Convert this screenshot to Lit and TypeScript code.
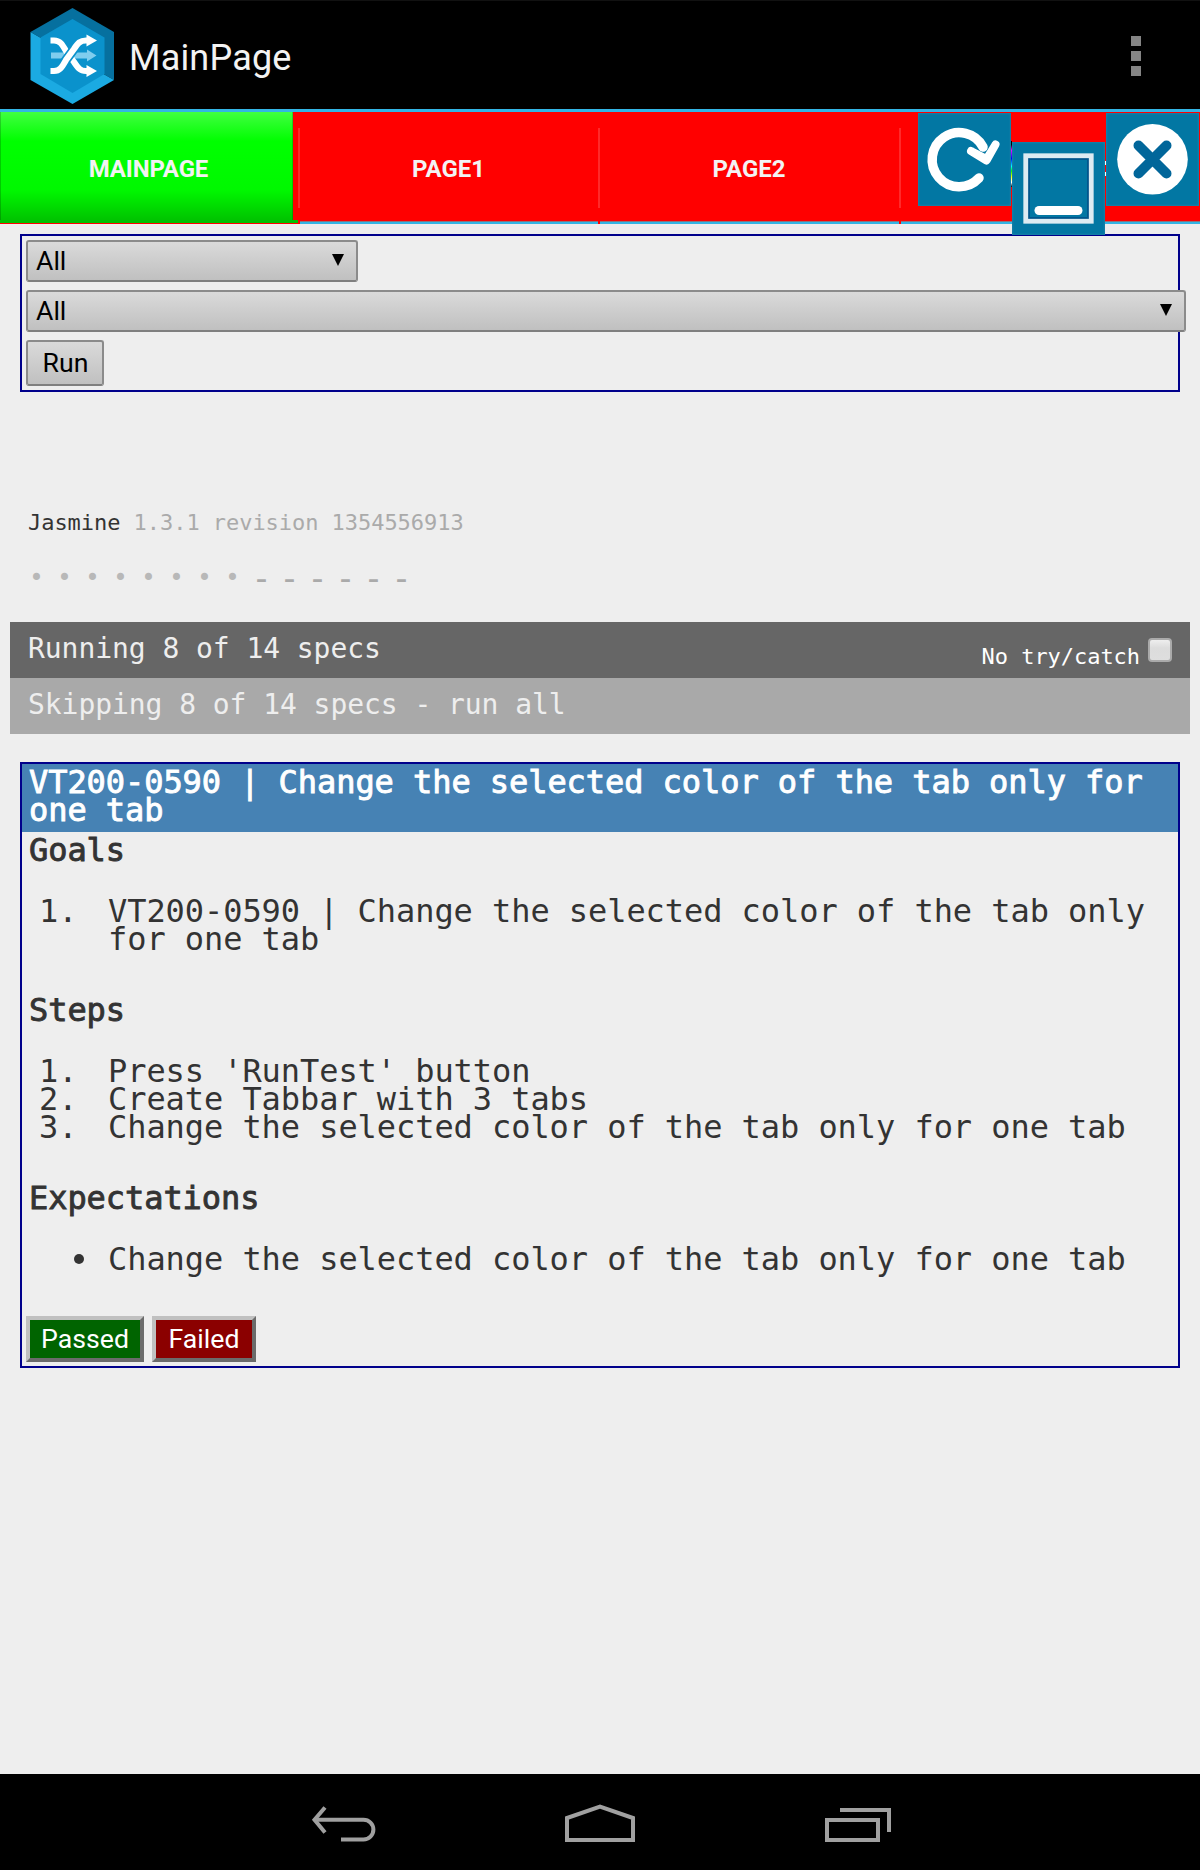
import { LitElement, html, css, svg } from "lit";
import { customElement, property } from "lit/decorators.js";

@customElement("picker-box")
class PickerBox extends LitElement {
  @property() label = "";
  static styles = css`
    :host { display: block; height: 42px; }
    .box {
      box-sizing: border-box; height: 42px; display: flex; align-items: center; justify-content: space-between;
      padding: 0 12px 0 8px; border: 2px solid #8b8b8b; border-bottom-color: #7f7f7f; border-radius: 3px;
      background: linear-gradient(#dadada, #c0c0c0);
      font: 26.67px/31px Roboto, sans-serif; color: #000;
    }
    .arrow { width: 12px; height: 12px; margin-bottom: 3px; }
  `;
  render() {
    return html`<div class="box"><span>${this.label}</span>
      <svg class="arrow" viewBox="0 0 12 12"><path d="M0 0H12L6 12Z" /></svg></div>`;
  }
}

@customElement("spec-card")
class SpecCard extends LitElement {
  static styles = css`
    :host {
      display: block; box-sizing: border-box; height: 606px; border: 2px solid #00008b;
      font: 32px/28px "DejaVu Sans Mono", monospace; letter-spacing: -0.065px; color: #333;
    }
    .title, .head { margin: 0; font: inherit; -webkit-text-stroke: 0.9px currentColor; }
    .title { padding: 4px 7px 0; background: #4682b4; color: #fff; height: 68px; box-sizing: border-box; }
    .head { padding-left: 7px; }
    .head.first { margin-top: 4px; }
    .list { margin: 33px 0 43px; padding: 0; list-style: none; }
    .row { display: grid; grid-template-columns: 86px 1fr; }
    .mark { padding-left: 17px; }
    .dot { display: block; width: 10px; height: 10px; margin: 9px 0 0 52px; border-radius: 50%; background: #333; }
    .actions { display: flex; gap: 8px; padding-left: 4px; }
    .btn {
      box-sizing: border-box; height: 46px; margin: 0; padding: 0; border: 4px solid;
      border-color: #c0c0c0 #6b6b6b #6b6b6b #c0c0c0;
      font: 26.67px/36px Roboto, sans-serif; color: #fff;
    }
    .pass { width: 118px; background: #006400; }
    .fail { width: 104px; background: #8b0000; }
  `;
  private ordered(items: string[]) {
    return html`<div class="list">${items.map(
      (t, i) => html`<div class="row"><span class="mark">${i + 1}.</span><span>${t}</span></div>`)}</div>`;
  }
  render() {
    return html`
      <h2 class="title">VT200-0590 | Change the selected color of the tab only for one tab</h2>
      <h3 class="head first">Goals</h3>
      ${this.ordered(["VT200-0590 | Change the selected color of the tab only for one tab"])}
      <h3 class="head">Steps</h3>
      ${this.ordered([
        "Press 'RunTest' button",
        "Create Tabbar with 3 tabs",
        "Change the selected color of the tab only for one tab",
      ])}
      <h3 class="head">Expectations</h3>
      <div class="list"><div class="row"><i class="dot"></i><span>Change the selected color of the tab only for one tab</span></div></div>
      <div class="actions"><button class="btn pass">Passed</button><button class="btn fail">Failed</button></div>
    `;
  }
}

const logo = svg`
  <path fill="#06709f" d="M30.5 32L72.5 8L114 32V80L72 56Z"/>
  <path fill="#1baae2" d="M30.5 32L72 56L114 80L72.5 104L30.5 80Z"/>
  <path fill="#0a92cc" d="M72.5 19L104.5 37.5V74L72.5 93L40.5 74V37.5Z"/>
  <path fill="#7fcdee" d="M51 52.5H87V49.5L96.5 55.5L87 61.5V58.5H51Z"/>
  <g fill="none" stroke="#fff" stroke-width="6.2">
    <path d="M50.500 40.500H54C60 40.500 62 44 66 51L74 62C78 68 80 71 86 71H88"/>
    <path stroke="#0a92cc" stroke-width="9.500" d="M63 64.500L66 60L74 49L76 46"/>
    <path d="M50.500 71H54C60 71 62 67 66 60L74 49C78 43 80 40.500 86 40.500H88"/>
  </g>
  <path fill="#fff" d="M86.500 34.500L97 40.500L86.500 46.500ZM86.500 65L97 71L86.500 77Z"/>`;

@customElement("app-root")
class AppRoot extends LitElement {
  static styles = css`
    :host {
      display: flex; flex-direction: column; position: relative; width: 1200px; height: 1870px; overflow: hidden;
      background: #eee; font-family: Roboto, sans-serif;
    }
    .bar {
      box-sizing: border-box; flex: none; height: 112px; display: flex; align-items: center; background: #000;
      border-top: 1px solid #111; border-bottom: 3px solid #33b5e5; padding: 0 59px 0 30px;
    }
    .logo { width: 85px; height: 98px; margin-top: 2px; }
    .name { margin: 6px 0 0 14px; flex: 1; font-size: 36px; line-height: 42px; letter-spacing: 0.2px; color: #f3f3f3; }
    .more { display: grid; gap: 5px; margin-top: 2px; }
    .more i { width: 10px; height: 10px; background: #858585; }
    .tabs { flex: none; height: 112px; display: grid; grid-template-columns: 300px 300px 301px 1fr; background: #f00; }
    .tab {
      display: flex; flex-direction: column; box-sizing: border-box; height: 112px; text-align: center;
      background: linear-gradient(#ff2a2a, #ff2a2a) right 0 top 16px / 2px 80px no-repeat,
        linear-gradient(#8a7480 0 1px, #33b5e5 1px) left 0 bottom 0 / calc(100% - 2px) 3px no-repeat;
      font-weight: 700; font-size: 24px; line-height: 28px; color: #f3f3f3; padding: 43px 3px 0 0;
    }
    .tab.last { background: linear-gradient(#8a7480 0 1px, #33b5e5 1px) left bottom / 100% 3px no-repeat; }
    .tab.on {
      padding-right: 3px; letter-spacing: -0.15px;
      background: linear-gradient(#ff2a2a, #ff2a2a) right 0 top 16px / 2px 80px no-repeat,
        linear-gradient(#00c000, #00c000) left 0 top 108px / 298px 3px no-repeat,
        linear-gradient(90deg, #00000030 1px, transparent 1px 292px, #00000030 292px) left top / 293px 108px no-repeat,
        linear-gradient(#41ff41, #0f0f 27%, #0f0 30%, #00f800 72%, #00c400) left top / 293px 108px no-repeat;
    }
    .float { position: absolute; width: 93px; height: 93px; background: #0277a3; box-shadow: inset 0 0 2px 1px #1a80a6; }
    .float svg { display: block; }
    .reload { left: 918px; top: 113px; }
    .mini { left: 1012px; top: 142px; }
    .close { left: 1106px; top: 113px; }
    .sliver { position: absolute; left: 1011px; top: 141px; width: 1px; height: 46px;
      background: linear-gradient(#000 8%, #f0f 20%, #00f 38%, #0ff 55%, #0f0 65%, #ff0 78%, #fff 90%, #000); }
    .edge { position: absolute; left: 1105px; top: 161px; width: 1px; height: 15px;
      background: linear-gradient(#fff 4px, transparent 4px 11px, #fff 11px); }
    .page { flex: 1; display: flex; flex-direction: column; font-family: "DejaVu Sans Mono", monospace; }
    .panel {
      box-sizing: border-box; flex: none; width: 1160px; height: 158px; margin: 10px 0 0 20px; padding: 4px; border: 2px solid #00008b;
      display: flex; flex-direction: column; gap: 8px;
    }
    .short { width: 332px; }
    .long { width: 1160px; }
    .run {
      box-sizing: border-box; width: 78px; height: 46px; padding: 0 0 0 1px; border: 2px solid #8b8b8b; border-bottom-color: #7f7f7f;
      border-radius: 3px; background: linear-gradient(#dadada, #c0c0c0); font: 26.67px/31px Roboto, sans-serif; color: #000;
    }
    .banner { margin: 117px 0 0 28px; font-size: 22px; line-height: 28px; letter-spacing: -0.045px; color: #aaa; }
    .banner b { font-weight: 400; color: #333; }
    .dots { display: flex; margin: 27px 0 0 22.5px; height: 28px; }
    .dots span { width: 28px; text-align: center; font-size: 24px; line-height: 28px; }
    .dots .done { color: #b8b8b8; }
    .dots .skip { font-size: 34px; color: #aaa; padding-left: 1px; margin-right: -1px; }
    .strip {
      display: flex; justify-content: space-between; box-sizing: border-box; height: 56px; margin: 0 10px; padding: 0 18px;
      font-size: 28px; line-height: 54px; letter-spacing: -0.057px; color: #eee;
    }
    .dark { margin-top: 30px; background: #666; }
    .light { background: #a9a9a9; }
    .catch { display: flex; gap: 8px; font-size: 22px; letter-spacing: -0.045px; color: #fff; line-height: 70px; height: 56px; }
    .check {
      box-sizing: border-box; width: 24px; height: 24px; margin-top: 16px; border: 2px solid #aaa; border-radius: 4px;
      background: linear-gradient(#eee, #dcdcdc 40%, #dedede);
    }
    .card { margin: 28px 20px 0; }
    .nav { flex: none; height: 96px; background: #000; display: flex; justify-content: center; gap: 186px; }
    .nav svg { width: 70px; height: 96px; fill: none; stroke: #a0a0a0; stroke-width: 4; }
  `;
  render() {
    return html`
      <header class="bar">
        <svg class="logo" viewBox="30 7 85 98">${logo}</svg>
        <span class="name">MainPage</span>
        <span class="more"><i></i><i></i><i></i></span>
      </header>
      <nav class="tabs">
        <span class="tab on">MAINPAGE</span><span class="tab">PAGE1</span><span class="tab">PAGE2</span><span class="tab last"></span>
      </nav>
      <i class="sliver"></i><i class="edge"></i>
      <span class="float reload"><svg width="93" height="93" viewBox="0 0 93 93" fill="none" stroke="#fff">
        <path stroke-width="9.500" stroke-linecap="round" d="M61 65A27 27 0 1 1 65 34"/>
        <path fill="#fff" stroke-width="8" stroke-linecap="round" stroke-linejoin="round" d="M53 38L68.500 47.500L77.500 31.500L68.500 46Z"/></svg></span>
      <span class="float mini"><svg width="93" height="93" viewBox="0 0 93 93" fill="none">
        <rect x="16.500" y="16.500" width="60" height="60" stroke="#00568c" stroke-width="3"/>
        <rect x="13.750" y="13.750" width="65.500" height="65.500" stroke="#dcebf2" stroke-width="4.800"/>
        <path stroke="#fff" stroke-width="9" stroke-linecap="round" d="M27 68.500H66"/></svg></span>
      <span class="float close"><svg width="93" height="93" viewBox="0 0 93 93">
        <circle cx="46.500" cy="46.300" r="35.300" fill="#fff"/>
        <path stroke="#01669a" stroke-width="10" stroke-linecap="round" d="M32.500 32.500L60.500 60.500M60.500 32.500L32.500 60.500"/></svg></span>
      <main class="page">
        <section class="panel">
          <picker-box class="short" label="All"></picker-box>
          <picker-box class="long" label="All"></picker-box>
          <button class="run">Run</button>
        </section>
        <div class="banner"><b>Jasmine</b> 1.3.1 revision 1354556913</div>
        <div class="dots">
          ${Array.from({ length: 14 }, (_, i) => html`<span class=${i < 8 ? "done" : "skip"}>${i < 8 ? "•" : "-"}</span>`)}
        </div>
        <div class="strip dark"><span>Running 8 of 14 specs</span>
          <span class="catch">No try/catch<i class="check"></i></span></div>
        <div class="strip light"><span>Skipping 8 of 14 specs - run all</span></div>
        <spec-card class="card"></spec-card>
      </main>
      <footer class="nav">
        <svg viewBox="309 1774 70 96"><path d="M315 1819.700H363.500A9.800 9.800 0 0 1 363.500 1839.500H341"/><path d="M325 1807.500L314.500 1819.700L325 1832.500"/></svg>
        <svg viewBox="565 1774 70 96"><path d="M567 1840V1818L600 1806.500L633 1818V1840Z"/></svg>
        <svg viewBox="821 1774 70 96" overflow="visible"><path d="M827 1820H878V1840H827ZM840 1810H889V1832"/></svg>
      </footer>
    `;
  }
}
